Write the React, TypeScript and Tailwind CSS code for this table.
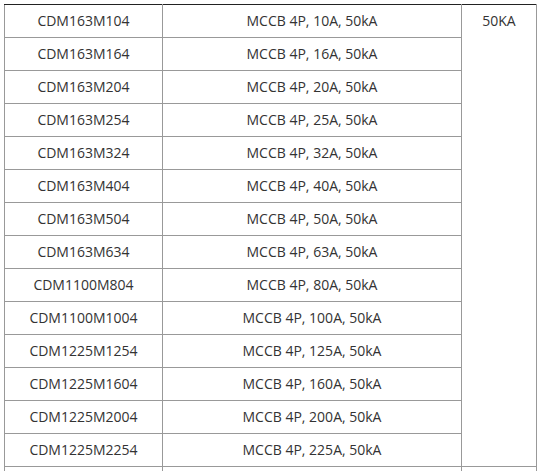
const rows = [
  ["CDM163M104", "MCCB 4P, 10A, 50kA"],
  ["CDM163M164", "MCCB 4P, 16A, 50kA"],
  ["CDM163M204", "MCCB 4P, 20A, 50kA"],
  ["CDM163M254", "MCCB 4P, 25A, 50kA"],
  ["CDM163M324", "MCCB 4P, 32A, 50kA"],
  ["CDM163M404", "MCCB 4P, 40A, 50kA"],
  ["CDM163M504", "MCCB 4P, 50A, 50kA"],
  ["CDM163M634", "MCCB 4P, 63A, 50kA"],
  ["CDM1100M804", "MCCB 4P, 80A, 50kA"],
  ["CDM1100M1004", "MCCB 4P, 100A, 50kA"],
  ["CDM1225M1254", "MCCB 4P, 125A, 50kA"],
  ["CDM1225M1604", "MCCB 4P, 160A, 50kA"],
  ["CDM1225M2004", "MCCB 4P, 200A, 50kA"],
  ["CDM1225M2254", "MCCB 4P, 225A, 50kA"],
];

export default function App() {
  return (
    <div className="w-[540px] h-[471px] overflow-hidden bg-white pt-[4px] pl-[4px]" style={{ fontFamily: '"Open Sans", sans-serif' }}>
      <table className="table-fixed border-collapse w-[533px] text-[14px] leading-[20px] text-[#333]">
        <colgroup>
          <col className="w-[158px]" />
          <col className="w-[299px]" />
          <col className="w-[75px]" />
        </colgroup>
        <tbody>
          {rows.map(([code, desc], i) => (
            <tr key={code} className="h-[33px]">
              <td className={`border border-[#999] text-center p-0 ${i === 0 ? "border-t-[#222]" : ""}`}>{code}</td>
              <td className={`border border-[#999] text-center p-0 ${i === 0 ? "border-t-[#222]" : ""}`}>{desc}</td>
              {i === 0 && (
                <td rowSpan={rows.length} className="border border-[#999] border-t-[#222] text-center align-top pt-[6px]">
                  50KA
                </td>
              )}
            </tr>
          ))}
          <tr className="h-[33px]">
            <td className="border border-[#999]" />
            <td className="border border-[#999]" />
            <td className="border border-[#999]" />
          </tr>
        </tbody>
      </table>
    </div>
  );
}
